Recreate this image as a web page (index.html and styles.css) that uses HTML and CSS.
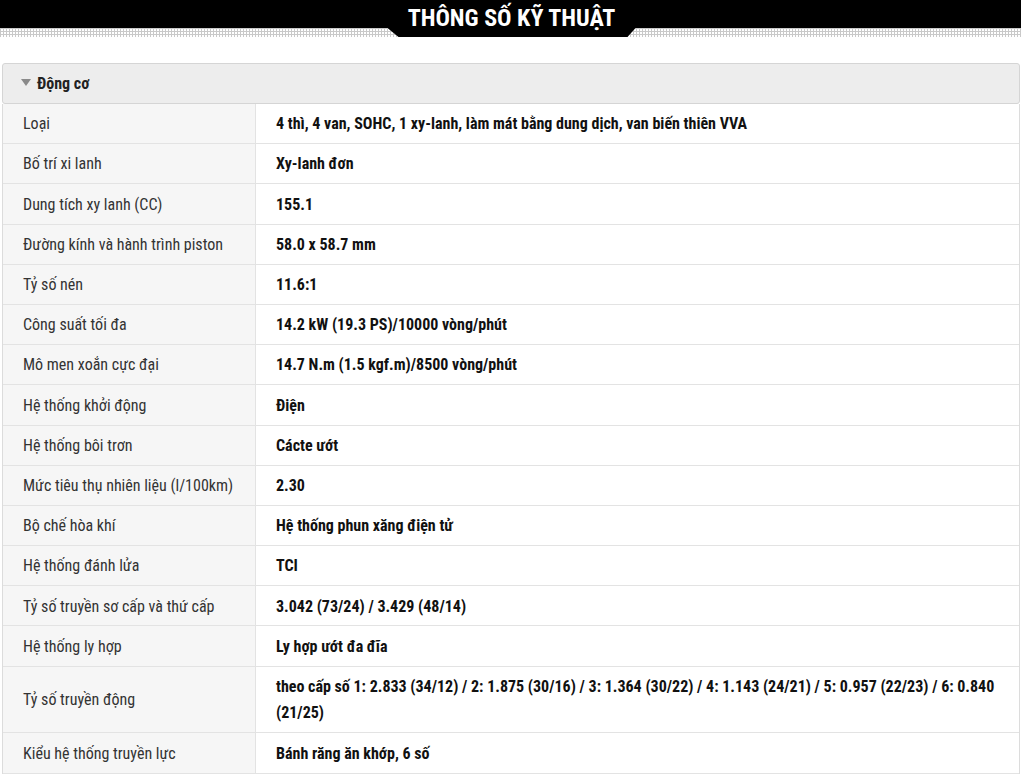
FILE: index.html
```html
<!DOCTYPE html>
<html lang="vi">
<head>
<meta charset="utf-8">
<title>Thông số kỹ thuật</title>
<link rel="stylesheet" href="styles.css">
</head>
<body>
<div class="title-bar">
  <h1 class="title-tab">THÔNG SỐ KỸ THUẬT</h1>
</div>
<section class="panel">
  <div class="panel-head"><span class="caret"></span>Động cơ</div>
  <div class="specs">
    <div class="row"><div class="label">Loại</div><div class="value">4 thì, 4 van, SOHC, 1 xy-lanh, làm mát bằng dung dịch, van biến thiên VVA</div></div>
    <div class="row"><div class="label">Bố trí xi lanh</div><div class="value">Xy-lanh đơn</div></div>
    <div class="row"><div class="label">Dung tích xy lanh (CC)</div><div class="value">155.1</div></div>
    <div class="row"><div class="label">Đường kính và hành trình piston</div><div class="value">58.0 x 58.7 mm</div></div>
    <div class="row"><div class="label">Tỷ số nén</div><div class="value">11.6:1</div></div>
    <div class="row"><div class="label">Công suất tối đa</div><div class="value">14.2 kW (19.3 PS)/10000 vòng/phút</div></div>
    <div class="row"><div class="label">Mô men xoắn cực đại</div><div class="value">14.7 N.m (1.5 kgf.m)/8500 vòng/phút</div></div>
    <div class="row"><div class="label">Hệ thống khởi động</div><div class="value">Điện</div></div>
    <div class="row"><div class="label">Hệ thống bôi trơn</div><div class="value">Cácte ướt</div></div>
    <div class="row"><div class="label">Mức tiêu thụ nhiên liệu (l/100km)</div><div class="value">2.30</div></div>
    <div class="row"><div class="label">Bộ chế hòa khí</div><div class="value">Hệ thống phun xăng điện tử</div></div>
    <div class="row"><div class="label">Hệ thống đánh lửa</div><div class="value">TCI</div></div>
    <div class="row"><div class="label">Tỷ số truyền sơ cấp và thứ cấp</div><div class="value">3.042 (73/24) / 3.429 (48/14)</div></div>
    <div class="row"><div class="label">Hệ thống ly hợp</div><div class="value">Ly hợp ướt đa đĩa</div></div>
    <div class="row"><div class="label">Tỷ số truyền động</div><div class="value">theo cấp số 1: 2.833 (34/12) / 2: 1.875 (30/16) / 3: 1.364 (30/22) / 4: 1.143 (24/21) / 5: 0.957 (22/23) / 6: 0.840 (21/25)</div></div>
    <div class="row"><div class="label">Kiểu hệ thống truyền lực</div><div class="value">Bánh răng ăn khớp, 6 số</div></div>
  </div>
</section>
</body>
</html>
```
FILE: styles.css
```css
html, body {
  margin: 0;
  padding: 0;
  background: #fff;
}
body {
  font-family: "Roboto Condensed", Roboto, "Liberation Sans Narrow", "DejaVu Sans Condensed", sans-serif;
  font-stretch: 75%;
  font-size: 16px;
  color: #333;
  overflow: hidden;
}
.title-bar {
  height: 37px;
  display: flex;
  justify-content: center;
  padding-left: 2px;
  background-image:
    linear-gradient(#000, #000),
    linear-gradient(90deg, #c9c9c9 1px, transparent 1px),
    linear-gradient(#c9c9c9 1px, transparent 1px);
  background-size: 100% 28px, 3px 3px, 3px 3px;
  background-repeat: no-repeat, repeat, repeat;
  background-position: 0 0, 0 1px, 0 1px;
}
.title-tab {
  margin: 0;
  width: 248px;
  height: 37px;
  background: #000;
  color: #fff;
  font-size: 24px;
  font-weight: 700;
  line-height: 37px;
  text-align: center;
  clip-path: polygon(0 0, 100% 0, 100% 28px, calc(100% - 8px) 100%, 11px 100%, 0 28px);
}
.panel {
  margin: 26px 1px 0 2px;
}
.panel-head {
  height: 39px;
  border: 1px solid #d5d5d5;
  border-radius: 3px;
  background: #ededed;
  display: flex;
  align-items: center;
  padding-left: 18px;
  font-weight: 700;
  color: #222;
}
.caret {
  width: 0;
  height: 0;
  border-left: 5px solid transparent;
  border-right: 5px solid transparent;
  border-top: 7px solid #8a8a8a;
  margin-right: 6px;
  margin-top: -3px;
}
.specs {
  border-left: 1px solid #dcdcdc;
  border-right: 1px solid #dcdcdc;
}
.row {
  display: grid;
  grid-template-columns: 253px 1fr;
  border-bottom: 1px solid #e3e3e3;
}
.label {
  background: #f6f6f6;
  border-right: 1px solid #e3e3e3;
  padding: 7.3px 20px 5.4px;
  line-height: 26.5px;
  display: flex;
  align-items: center;
  color: #333;
}
.value {
  padding: 7.3px 20px 5.4px;
  line-height: 26.5px;
  font-weight: 700;
  color: #111;
}
```
